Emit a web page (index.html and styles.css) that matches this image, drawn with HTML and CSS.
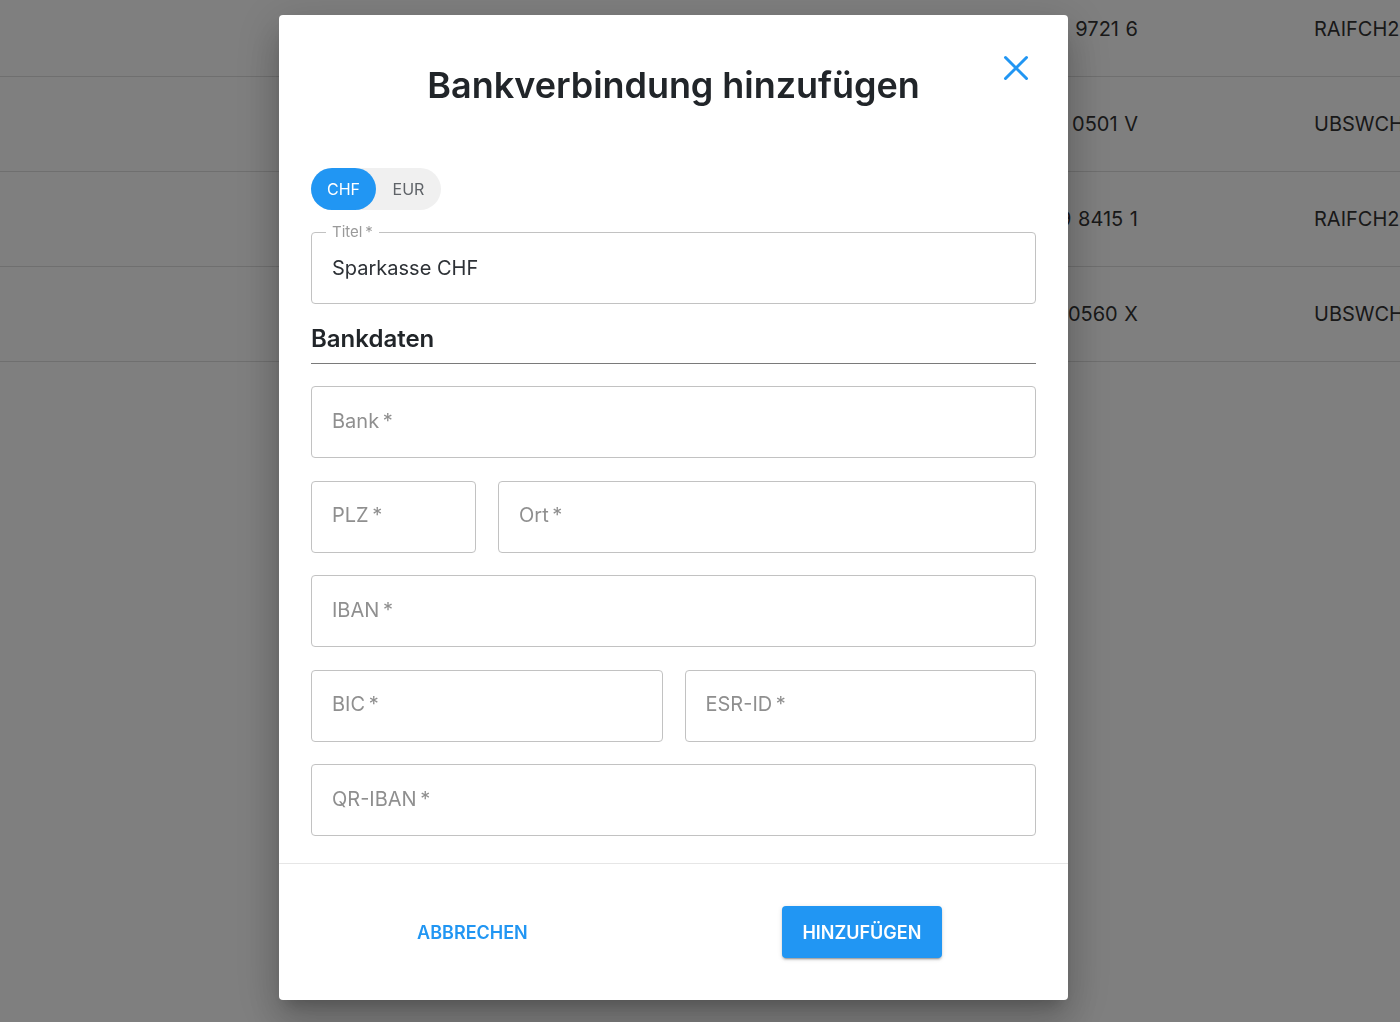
FILE: index.html
```html
<!DOCTYPE html>
<html lang="de">
<head>
<meta charset="utf-8">
<title>Bankverbindung hinzufügen</title>
<link rel="stylesheet" href="styles.css">
</head>
<body>
<div class="page">
  <div class="table">
    <div class="row"><span class="c-iban">CH12 8080 8001 2233 9721 6</span><span class="c-bic">RAIFCH22XXX</span></div>
    <div class="row"><span class="c-iban">CH45 0023 0230 7711 0501 V</span><span class="c-bic">UBSWCHZH80A</span></div>
    <div class="row"><span class="c-iban">CH30 8080 8003 1129 8415 1</span><span class="c-bic">RAIFCH22XXX</span></div>
    <div class="row"><span class="c-iban">CH88 0023 0230 6622 0560 X</span><span class="c-bic">UBSWCHZH80A</span></div>
  </div>
</div>

<div class="overlay"></div>

<div class="modal">
  <header class="modal-head">
    <h1 class="modal-title">Bankverbindung hinzufügen</h1>
    <button class="close" aria-label="Schliessen">
      <svg viewBox="0 0 26 26" width="26" height="26"><path d="M2.5 2.5 L23.5 23.5 M23.5 2.5 L2.5 23.5" stroke="#2196f3" stroke-width="3" stroke-linecap="round" fill="none"/></svg>
    </button>
  </header>

  <div class="modal-body">
    <div class="toggle">
      <span class="seg active">CHF</span>
      <span class="seg">EUR</span>
    </div>

    <div class="field filled">
      <span class="legend">Titel&#8201;*</span>
      <span class="value">Sparkasse CHF</span>
    </div>

    <h2 class="section">Bankdaten</h2>

    <div class="fields">
      <div class="field"><span class="ph">Bank&#8201;*</span></div>
      <div class="pair pair-plz">
        <div class="field"><span class="ph">PLZ&#8201;*</span></div>
        <div class="field"><span class="ph">Ort&#8201;*</span></div>
      </div>
      <div class="field"><span class="ph">IBAN&#8201;*</span></div>
      <div class="pair pair-half">
        <div class="field"><span class="ph">BIC&#8201;*</span></div>
        <div class="field"><span class="ph">ESR-ID&#8201;*</span></div>
      </div>
      <div class="field"><span class="ph">QR-IBAN&#8201;*</span></div>
    </div>
  </div>

  <footer class="modal-foot">
    <button class="btn-text">ABBRECHEN</button>
    <button class="btn-primary">HINZUFÜGEN</button>
  </footer>
</div>
</body>
</html>
```

FILE: styles.css
```css
* { box-sizing: border-box; }

html, body {
  margin: 0;
  padding: 0;
  height: 100%;
}

body {
  font-family: Inter, "Noto Sans", "Liberation Sans", sans-serif;
  background: #ffffff;
  overflow: hidden;
}

/* background page */
.page {
  width: 100%;
}

.table {
  margin-top: -18px;
}

.row {
  display: grid;
  grid-template-columns: 1138px 176px 1fr;
  height: 95px;
  align-items: center;
  border-bottom: 1px solid #dedede;
  font-size: 20px;
  color: #333333;
}

.c-iban {
  grid-column: 1;
  text-align: right;
  white-space: nowrap;
  overflow: hidden;
  word-spacing: 1px;
}

.c-bic {
  grid-column: 3;
  white-space: nowrap;
}

/* overlay */
.overlay {
  position: fixed;
  inset: 0;
  background: rgba(0, 0, 0, 0.5);
}

/* modal */
.modal {
  position: fixed;
  left: 279px;
  top: 15px;
  width: 789px;
  background: #ffffff;
  border-radius: 4px;
  box-shadow: 0 11px 15px -7px rgba(0,0,0,0.2), 0 24px 38px 3px rgba(0,0,0,0.14), 0 9px 46px 8px rgba(0,0,0,0.12);
  display: flex;
  flex-direction: column;
}

.modal-head {
  position: relative;
  padding-top: 48px;
  text-align: center;
}

.modal-title {
  margin: 0;
  font-size: 36px;
  line-height: 44px;
  font-weight: 600;
  color: #212529;
  letter-spacing: -0.05px;
}

.close {
  position: absolute;
  top: 40px;
  right: 39px;
  width: 26px;
  height: 26px;
  padding: 0;
  border: 0;
  background: transparent;
  display: flex;
}

.modal-body {
  padding: 61px 32px 27px;
}

.toggle {
  display: inline-flex;
  height: 42px;
  width: 130px;
  background: #f0f0f0;
  border-radius: 21px;
  margin-bottom: 22px;
}

.seg {
  flex: 1;
  display: flex;
  align-items: center;
  justify-content: center;
  font-size: 16px;
  color: #5f6368;
  border-radius: 21px;
  padding-bottom: 1px;
}

.seg.active {
  background: #2196f3;
  color: #ffffff;
}

.field {
  position: relative;
  height: 72px;
  border: 1px solid #c2c2c2;
  border-radius: 4px;
  display: flex;
  align-items: center;
  padding-left: 20px;
  padding-bottom: 3px;
  font-size: 20px;
}

.field.filled {
  padding-bottom: 1px;
}

.ph {
  color: #8f8f8f;
}

.value {
  color: #2d3136;
}

.legend {
  position: absolute;
  left: 14px;
  top: -10px;
  padding: 0 6px;
  background: #ffffff;
  font-size: 15px;
  line-height: 18px;
  color: #9a9a9a;
}

.section {
  margin: 19px 0 0;
  padding-bottom: 8px;
  border-bottom: 1px solid #7a7a7a;
  font-size: 24px;
  line-height: 32px;
  font-weight: 600;
  color: #212529;
}

.fields {
  margin-top: 22px;
  display: flex;
  flex-direction: column;
  gap: 22.5px;
}

.pair {
  display: grid;
  gap: 22px;
}

.pair-plz {
  grid-template-columns: 165px 1fr;
}

.pair-half {
  grid-template-columns: 1fr 1fr;
}

.modal-foot {
  height: 137px;
  border-top: 1px solid #e6e6e6;
  display: flex;
  align-items: center;
  justify-content: space-around;
  padding-right: 4px;
}

.btn-text {
  border: 0;
  background: transparent;
  font-family: inherit;
  font-size: 18px;
  font-weight: 600;
  color: #2196f3;
  padding: 0 10px;
  height: 52px;
  letter-spacing: 0;
  margin-left: 6px;
}

.btn-primary {
  border: 0;
  background: #2196f3;
  color: #ffffff;
  font-family: inherit;
  font-size: 18px;
  font-weight: 600;
  height: 52px;
  width: 160px;
  border-radius: 4px;
  letter-spacing: 0;
  box-shadow: 0 3px 1px -2px rgba(0,0,0,0.2), 0 2px 2px 0 rgba(0,0,0,0.14), 0 1px 5px 0 rgba(0,0,0,0.12);
}
```
